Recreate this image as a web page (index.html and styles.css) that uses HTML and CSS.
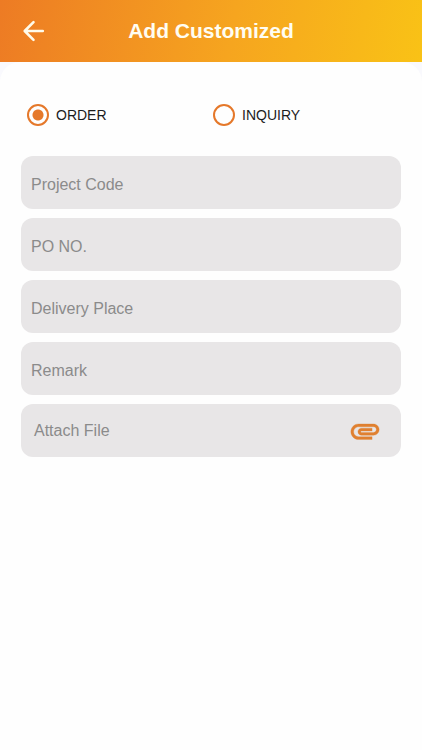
FILE: index.html
```html
<!DOCTYPE html>
<html lang="en">
<head>
<meta charset="utf-8">
<meta name="viewport" content="width=device-width, initial-scale=1">
<title>Add Customized</title>
<link rel="stylesheet" href="styles.css">
</head>
<body>
<header class="bar">
  <button class="back" type="button" aria-label="Back">
    <svg viewBox="0 0 24 24" width="24" height="24" aria-hidden="true"><path d="M20.800 12H3M11.500 3.200 2.700 12l8.800 8.800"/></svg>
  </button>
  <h1 class="title">Add Customized</h1>
</header>
<main class="sheet">
  <form class="form">
    <div class="types">
      <label class="type"><input class="radio" type="radio" name="type" value="order" checked>ORDER</label>
      <label class="type"><input class="radio" type="radio" name="type" value="inquiry">INQUIRY</label>
    </div>
    <div class="fields">
      <input class="field" type="text" name="project" placeholder="Project Code" aria-label="Project Code">
      <input class="field" type="text" name="po" placeholder="PO NO." aria-label="PO NO.">
      <input class="field" type="text" name="place" placeholder="Delivery Place" aria-label="Delivery Place">
      <input class="field" type="text" name="remark" placeholder="Remark" aria-label="Remark">
      <label class="field attach" for="file">Attach File
        <svg viewBox="0 0 24 24" width="34" height="34" aria-hidden="true"><path d="M2 12.500C2 9.460 4.460 7 7.500 7H18c2.210 0 4 1.790 4 4s-1.790 4-4 4H9.500C8.120 15 7 13.880 7 12.500S8.120 10 9.500 10H17v2H9.410c-.550 0-.550 1 0 1H18c1.100 0 2-.900 2-2s-.900-2-2-2H7.500C5.570 9 4 10.570 4 12.500S5.570 16 7.500 16H17v2H7.500C4.460 18 2 15.540 2 12.500z"/></svg>
        <input class="file" id="file" type="file" name="file">
      </label>
    </div>
  </form>
</main>
</body>
</html>
```
FILE: styles.css
```css
* {
  box-sizing: border-box;
}

body {
  margin: 0;
  min-height: 100vh;
  display: flex;
  flex-direction: column;
  background: #f9f9fd;
  color: #1c1c1c;
  font-family: "Liberation Sans", Arial, sans-serif;
}

.bar {
  display: grid;
  grid-template-columns: 24px 1fr 24px;
  align-items: center;
  height: 62px;
  padding: 0 22px;
  background: linear-gradient(100deg, #ed7b24, #f6a51f 55%, #f9c216);
}

.back {
  display: flex;
  padding: 0;
  border: 0;
  background: none;
}

.back svg {
  fill: none;
  stroke: #fffbea;
  stroke-width: 2.6;
  stroke-linecap: round;
  stroke-linejoin: round;
}

.title {
  margin: 0;
  color: #fffdf2;
  font-size: 21px;
  line-height: 28px;
  text-align: center;
}

.sheet {
  flex: 1;
  padding: 42px 21px;
  border-radius: 20px 20px 0 0;
  background: #fefefe;
}

.types {
  display: grid;
  grid-template-columns: 186px 1fr;
  padding-left: 6px;
}

.type {
  display: flex;
  align-items: center;
  gap: 7px;
  font-size: 14px;
  line-height: 22px;
}

.radio {
  appearance: none;
  flex: none;
  width: 22px;
  height: 22px;
  margin: 0;
  border: 2px solid #e5782a;
  border-radius: 50%;
}

.radio:checked {
  background: radial-gradient(circle, #e5782a 5px, transparent 6px);
}

.fields {
  display: flex;
  flex-direction: column;
  gap: 9px;
  margin-top: 30px;
}

.field {
  width: 100%;
  height: 53px;
  padding: 4px 10px 0;
  border: 0;
  border-radius: 12px;
  background: #e8e6e7;
  color: #8b8b8b;
  font-family: inherit;
  font-size: 16px;
}

.field::placeholder {
  color: #8b8b8b;
}

.attach {
  display: flex;
  align-items: center;
  justify-content: space-between;
  padding: 0 19px 0 13px;
}

.attach svg {
  fill: #e08030;
  stroke: #e08030;
  stroke-width: 0.2;
}

.file {
  position: absolute;
  width: 1px;
  height: 1px;
  opacity: 0;
}
```
